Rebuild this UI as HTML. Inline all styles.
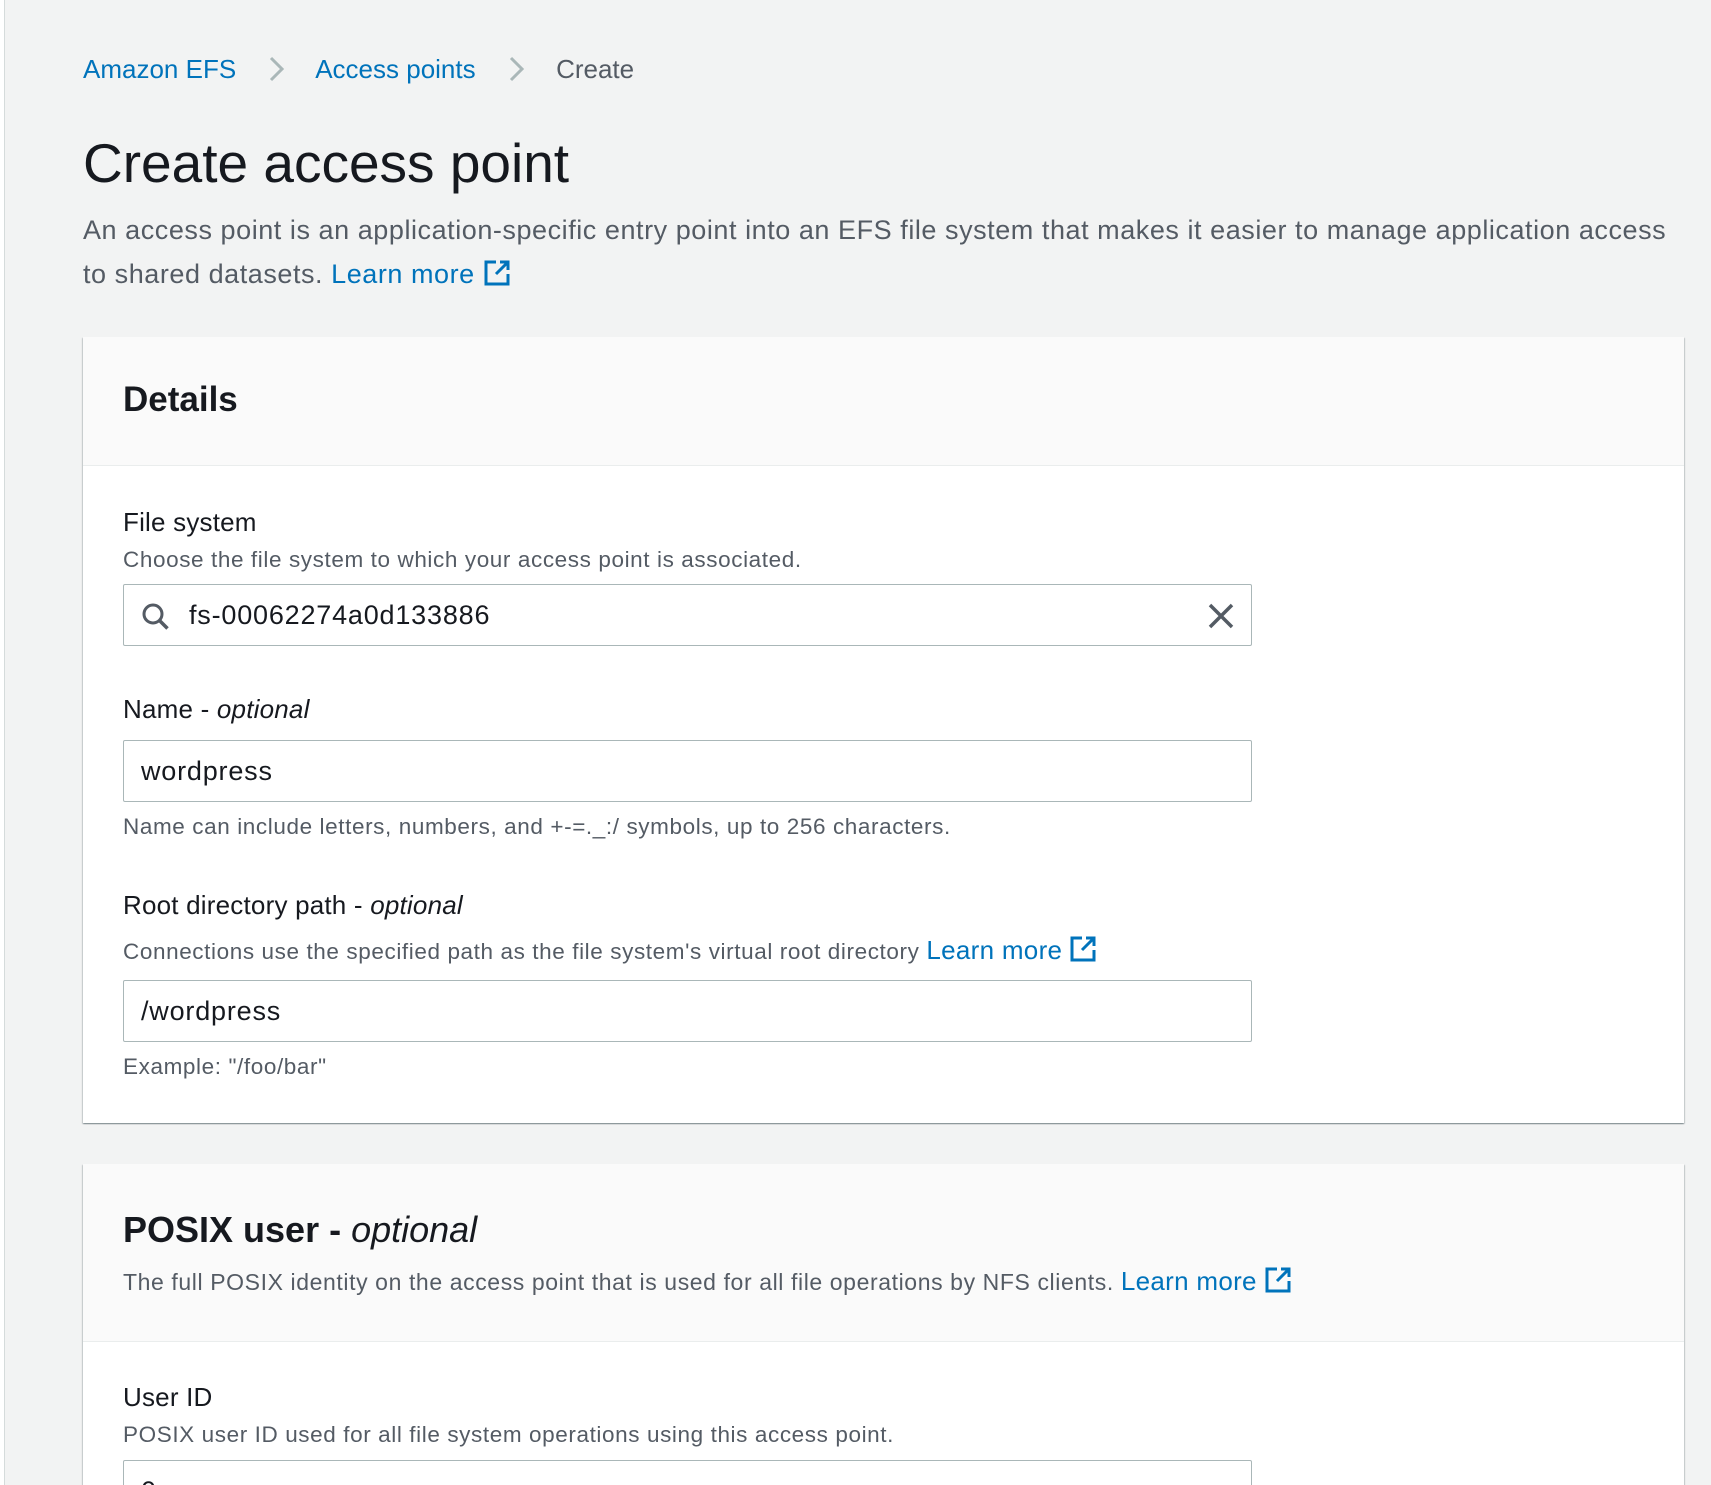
<!DOCTYPE html>
<html style="overflow:hidden;height:1485px"><head><meta charset="utf-8"><style>
*{margin:0;padding:0;box-sizing:border-box}
body{width:1711px;height:1485px;background:#f2f3f3;font-family:"Liberation Sans",sans-serif;color:#16191f;position:relative;overflow:hidden}
.a{position:absolute;white-space:nowrap}
.lk{color:#0073bb}
.g{color:#545b64}
.panel{position:absolute;left:83px;width:1601px;background:#fff;box-shadow:0 1px 1px 0 rgba(0,28,36,.3),1px 1px 1px 0 rgba(0,28,36,.15),-1px 1px 1px 0 rgba(0,28,36,.15)}
.hd{position:absolute;left:0;top:0;width:100%;background:#fafafa;border-bottom:1px solid #eaeded}
.inp{position:absolute;left:40px;width:1129px;height:62px;border:1px solid #aab7b8;border-radius:2px;background:#fff}
.inp .a{letter-spacing:0.8px}
.lbl{font-size:26px;color:#16191f;letter-spacing:0.2px}
.ds{font-size:22.5px;color:#545b64;letter-spacing:0.6px}
.ds .lk{letter-spacing:0.3px}
svg.ext{vertical-align:-4px}
</style></head><body>
<div style="position:absolute;left:0;top:0;width:5px;height:1485px;background:#fff;border-right:1px solid #d5dbdb"></div>
<div class="a" style="left:83px;top:53px;font-size:26px;line-height:32px">
<span class="lk">Amazon EFS</span>
<svg width="20" height="28" viewBox="0 0 20 28" style="margin:0 22px 0 24px;vertical-align:-5px"><path d="M4 3l11 11-11 11" fill="none" stroke="#aab7b8" stroke-width="3"/></svg>
<span class="lk">Access points</span>
<svg width="20" height="28" viewBox="0 0 20 28" style="margin:0 22px 0 24px;vertical-align:-5px"><path d="M4 3l11 11-11 11" fill="none" stroke="#aab7b8" stroke-width="3"/></svg>
<span class="g">Create</span></div>
<div class="a" style="left:83px;top:128px;font-size:55px;line-height:70px">Create access point</div>
<div class="a g" style="left:83px;top:208px;font-size:27px;line-height:44px;letter-spacing:0.55px">An access point is an application-specific entry point into an EFS file system that makes it easier to manage application access<br>to shared datasets. <span class="lk">Learn more</span> <svg class="ext" width="28" height="28" viewBox="0 0 28 28"><path d="M13 3H3v22h22V15" fill="none" stroke="#0073bb" stroke-width="3"/><path d="M17 3h8v8M25 3L13 15" fill="none" stroke="#0073bb" stroke-width="3"/></svg></div>

<div class="panel" style="top:337px;height:786px">
<div class="hd" style="height:129px"></div>
<div class="a" style="left:40px;top:43px;font-size:35px;font-weight:bold">Details</div>
<div class="a lbl" style="left:40px;top:170px">File system</div>
<div class="a ds" style="left:40px;top:210px">Choose the file system to which your access point is associated.</div>
<div class="inp" style="top:247px">
<svg class="a" style="left:17px;top:17px" width="30" height="30" viewBox="0 0 30 30"><circle cx="12" cy="12" r="9" fill="none" stroke="#545b64" stroke-width="3"/><path d="M18.5 18.5l8 8" stroke="#545b64" stroke-width="3.5"/></svg>
<div class="a" style="left:65px;top:15px;font-size:27px">fs-00062274a0d133886</div>
<svg class="a" style="left:1083px;top:17px" width="28" height="28" viewBox="0 0 28 28"><path d="M3 3l22 22M25 3L3 25" stroke="#545b64" stroke-width="3.5"/></svg>
</div>
<div class="a lbl" style="left:40px;top:357px">Name - <i>optional</i></div>
<div class="inp" style="top:403px"><div class="a" style="left:17px;top:15px;font-size:27px">wordpress</div></div>
<div class="a ds" style="left:40px;top:477px">Name can include letters, numbers, and +-=._:/ symbols, up to 256 characters.</div>
<div class="a lbl" style="left:40px;top:553px">Root directory path - <i>optional</i></div>
<div class="a ds" style="left:40px;top:598px">Connections use the specified path as the file system's virtual root directory <span class="lk" style="font-size:26px">Learn more</span> <svg class="ext" width="28" height="28" viewBox="0 0 28 28"><path d="M13 3H3v22h22V15" fill="none" stroke="#0073bb" stroke-width="3"/><path d="M17 3h8v8M25 3L13 15" fill="none" stroke="#0073bb" stroke-width="3"/></svg></div>
<div class="inp" style="top:643px"><div class="a" style="left:17px;top:15px;font-size:27px">/wordpress</div></div>
<div class="a ds" style="left:40px;top:717px">Example: "/foo/bar"</div>
</div>

<div class="panel" style="top:1164px;height:321px">
<div class="hd" style="height:178px"></div>
<div class="a" style="left:40px;top:45px;font-size:36px;font-weight:bold">POSIX user - <i style="font-weight:normal">optional</i></div>
<div class="a ds" style="left:40px;top:102px;font-size:23px">The full POSIX identity on the access point that is used for all file operations by NFS clients. <span class="lk" style="font-size:26px">Learn more</span> <svg class="ext" width="28" height="28" viewBox="0 0 28 28"><path d="M13 3H3v22h22V15" fill="none" stroke="#0073bb" stroke-width="3"/><path d="M17 3h8v8M25 3L13 15" fill="none" stroke="#0073bb" stroke-width="3"/></svg></div>
<div class="a lbl" style="left:40px;top:218px">User ID</div>
<div class="a ds" style="left:40px;top:258px">POSIX user ID used for all file system operations using this access point.</div>
<div class="inp" style="top:296px"><div class="a" style="left:17px;top:15px;font-size:27px">0</div></div>
</div>
</body></html>
